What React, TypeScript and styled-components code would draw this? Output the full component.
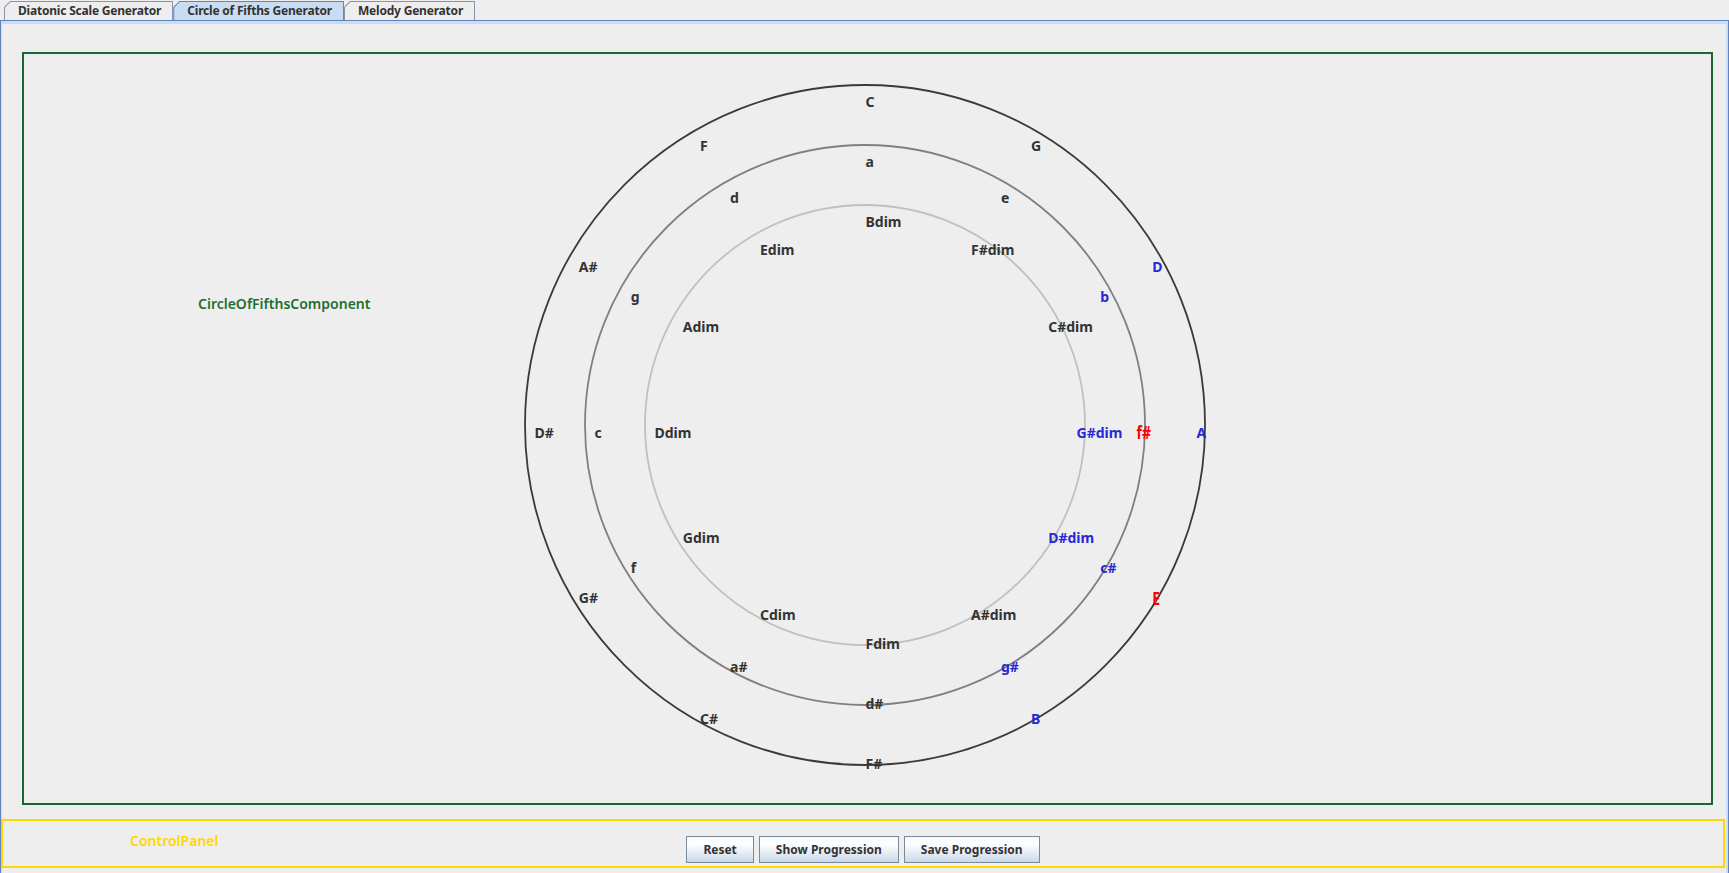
import React from 'react'
import styled, { createGlobalStyle } from 'styled-components'

const GlobalStyle = createGlobalStyle`
  html, body {
    margin: 0;
    padding: 0;
    background: #eeeeee;
    overflow: hidden;
  }
  body {
    font-family: 'Noto Sans', 'DejaVu Sans', sans-serif;
  }
`

const Window = styled.div`
  width: 1729px;
  height: 873px;
  display: flex;
  flex-direction: column;
  background: #eeeeee;
`

const TabStrip = styled.div`
  display: flex;
  align-items: flex-end;
  height: 20px;
  padding-left: 4px;
`

const Tab = styled.div<{ $selected?: boolean }>`
  height: 19px;
  box-sizing: border-box;
  padding: 1px 1px 0 1px;
  background: ${p => (p.$selected ? '#6382bf' : '#8696a8')};
  clip-path: polygon(6px 0, 100% 0, 100% 100%, 0 100%, 0 6px);
`

const TabFace = styled.div<{ $selected?: boolean }>`
  height: 100%;
  box-sizing: border-box;
  padding: 0 11px 0 13px;
  background: ${p => (p.$selected ? '#c8ddf2' : '#eeeeee')};
  clip-path: polygon(5.5px 0, 100% 0, 100% 100%, 0 100%, 0 5.5px);
  font-size: 12px;
  font-weight: 700;
  letter-spacing: -0.2px;
  line-height: 17px;
  color: #333333;
  white-space: nowrap;
`

const ContentArea = styled.div`
  flex: 1;
  display: flex;
  flex-direction: column;
  border: 1px solid #6382bf;
  border-bottom: none;
  box-shadow: inset 0 3px 0 #c8ddf2, inset -2px 0 0 #c8ddf2, inset 1px 0 0 #c8ddf2;
`

const CirclePanel = styled.div`
  display: grid;
  height: 753px;
  box-sizing: border-box;
  margin: 31px 15px 0 21px;
  border: 2px solid #1d662f;
`

const PanelLabel = styled.div<{ $color: string }>`
  font-size: 14px;
  font-weight: 600;
  line-height: 19px;
  color: ${p => p.$color};
  white-space: nowrap;
`

const CircleLabel = styled(PanelLabel)`
  grid-area: 1 / 1;
  justify-self: start;
  align-self: start;
  margin: 240px 0 0 174px;
`

const CircleCanvas = styled.svg`
  grid-area: 1 / 1;
  display: block;
  width: 1687px;
  height: 749px;
`

const ControlPanel = styled.div`
  display: grid;
  grid-template-columns: 1fr auto 1fr;
  height: 49px;
  box-sizing: border-box;
  margin: 14px 3px 0 0;
  border: 2px solid #ffd700;
`

const ControlLabel = styled(PanelLabel)`
  align-self: start;
  justify-self: start;
  margin: 10px 0 0 127px;
`

const ButtonRow = styled.div`
  display: flex;
  gap: 5px;
  align-self: end;
  margin-bottom: 3px;
`

const Button = styled.button`
  height: 27px;
  padding: 0 16px;
  border: 1px solid #7a8a99;
  border-radius: 0;
  background: linear-gradient(to bottom, #f4f8fc 0%, #ffffff 25%, #e4ecf5 65%, #c9d9ea 100%);
  font-family: 'Noto Sans', 'DejaVu Sans', sans-serif;
  font-size: 12px;
  font-weight: 700;
  color: #333333;
  cursor: pointer;
`

const BLUE = '#2828d6'
const RED = '#ff0000'
const DARK = '#333333'

interface IRing {
  radius: number
  stroke: string
  labelRadius: number
  notes: string[]
  colors: Record<string, string>
}

const rings: IRing[] = [
  {
    radius: 340,
    stroke: '#3a3a3a',
    labelRadius: 331,
    notes: ['C', 'G', 'D', 'A', 'E', 'B', 'F#', 'C#', 'G#', 'D#', 'A#', 'F'],
    colors: { D: BLUE, A: BLUE, E: RED, B: BLUE },
  },
  {
    radius: 280,
    stroke: '#808080',
    labelRadius: 271,
    notes: ['a', 'e', 'b', 'f#', 'c#', 'g#', 'd#', 'a#', 'f', 'c', 'g', 'd'],
    colors: { b: BLUE, 'f#': RED, 'c#': BLUE, 'g#': BLUE },
  },
  {
    radius: 220,
    stroke: '#c0c0c0',
    labelRadius: 211,
    notes: ['Bdim', 'F#dim', 'C#dim', 'G#dim', 'D#dim', 'A#dim', 'Fdim', 'Cdim', 'Gdim', 'Ddim', 'Adim', 'Edim'],
    colors: { 'G#dim': BLUE, 'D#dim': BLUE },
  },
]

// circle centre and label centre inside the panel
const CX = 841
const CY = 371
const LX = 841.5
const LY = 383.5

const CircleOfFifths: React.FC = () => (
  <CircleCanvas viewBox="0 0 1687 749">
    {rings.map(ring => (
      <circle key={ring.radius} cx={CX} cy={CY} r={ring.radius} fill="none" stroke={ring.stroke} strokeWidth={1.8} />
    ))}
    {rings.map(ring =>
      ring.notes.map((note, i) => {
        const angle = (i * Math.PI) / 6
        const x = LX + ring.labelRadius * Math.sin(angle)
        const y = LY - ring.labelRadius * Math.cos(angle)
        const color = ring.colors[note] || DARK
        const big = color === RED
        return (
          <text
            key={note}
            transform={big ? `translate(${x} ${y + 1.5}) scale(1 1.28)` : `translate(${x} ${y})`}
            fill={color}
            fontFamily="'Noto Sans', 'DejaVu Sans', sans-serif"
            fontWeight={700}
            fontSize={14}
          >
            {note}
          </text>
        )
      })
    )}
  </CircleCanvas>
)

const App: React.FC = () => (
  <Window>
    <GlobalStyle />
    <TabStrip>
      <Tab><TabFace>Diatonic Scale Generator</TabFace></Tab>
      <Tab $selected><TabFace $selected>Circle of Fifths Generator</TabFace></Tab>
      <Tab><TabFace>Melody Generator</TabFace></Tab>
    </TabStrip>
    <ContentArea>
      <CirclePanel>
        <CircleLabel $color="#1f6e31">CircleOfFifthsComponent</CircleLabel>
        <CircleOfFifths />
      </CirclePanel>
      <ControlPanel>
        <ControlLabel $color="#ffd700">ControlPanel</ControlLabel>
        <ButtonRow>
          <Button>Reset</Button>
          <Button>Show Progression</Button>
          <Button>Save Progression</Button>
        </ButtonRow>
      </ControlPanel>
    </ContentArea>
  </Window>
)

export default App
